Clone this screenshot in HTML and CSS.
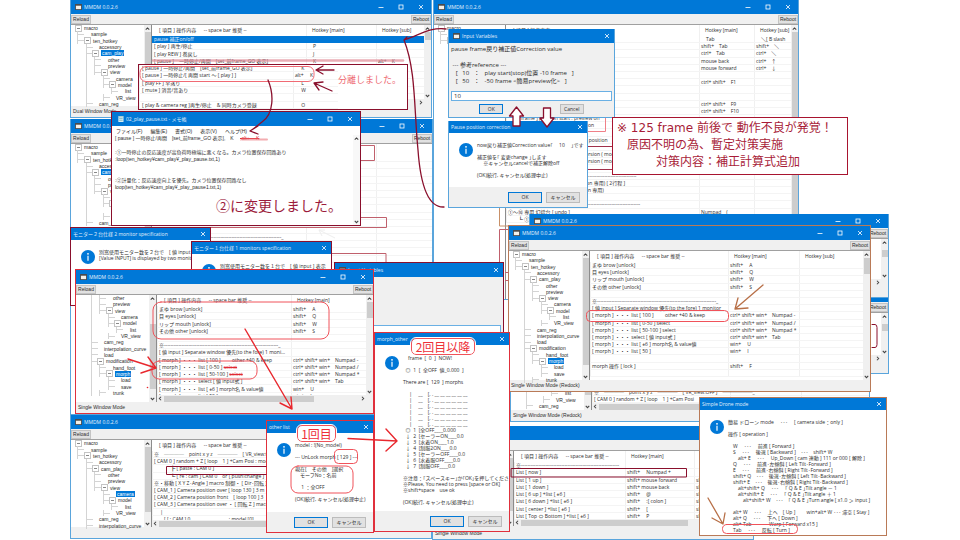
FILE: index.html
```html
<!DOCTYPE html>
<html lang="ja">
<head>
<meta charset="utf-8">
<meta name="viewport" content="width=device-width, initial-scale=1">
<title>MMDM 0.0.2.6</title>
<link rel="stylesheet" href="styles.css">
</head>
<body>
<svg class="sprite" aria-hidden="true">
  <symbol id="app" viewBox="0 0 8 7"><rect width="8" height="7" fill="#4a4a4a"/><rect x="1" y="2" width="6" height="4" fill="#f4f0e8"/></symbol>
  <symbol id="note" viewBox="0 0 7 7"><rect x="1" width="6" height="7" fill="#d8eef4"/><path d="M1 1h6M2 3h4M2 5h4" stroke="#5a9aa8" stroke-width=".7"/></symbol>
  <symbol id="min" viewBox="0 0 6 6"><path d="M.5 3.5h5" stroke="#fff" stroke-width=".8"/></symbol>
  <symbol id="max" viewBox="0 0 6 6"><rect x="1" y="1" width="4" height="4" fill="none" stroke="#fff" stroke-width=".8"/></symbol>
  <symbol id="close" viewBox="0 0 6 6"><path d="M1 1l4 4M5 1l-4 4" stroke="#fff" stroke-width=".8"/></symbol>
  <symbol id="up" viewBox="0 0 6 6"><path d="M1.5 4L3 2.5 4.500 4" fill="none" stroke="#444" stroke-width=".9"/></symbol>
  <symbol id="down" viewBox="0 0 6 6"><path d="M1.500 2.500L3 4l1.500-1.500" fill="none" stroke="#444" stroke-width=".9"/></symbol>
  <symbol id="left" viewBox="0 0 6 6"><path d="M3.500 1.500L2 3l1.500 1.500" fill="none" stroke="#444" stroke-width=".9"/></symbol>
  <symbol id="right" viewBox="0 0 6 6"><path d="M2.500 1.500L4 3 2.500 4.500" fill="none" stroke="#444" stroke-width=".9"/></symbol>
  <symbol id="info" viewBox="0 0 14 14"><circle cx="7" cy="7" r="7" fill="#0078d7"/><circle cx="7" cy="3.800" r=".9" fill="#fff"/><path d="M7 5.800v5" stroke="#fff" stroke-width="1.200"/></symbol>
</svg>

<main class="desktop">

<section class="window main-top">
  <header class="titlebar"><svg class="app"><use href="#app"/></svg><h2>MMDM 0.0.2.6</h2><button aria-label="Minimize"><svg><use href="#min"/></svg></button><button aria-label="Maximize"><svg><use href="#max"/></svg></button><button aria-label="Close"><svg><use href="#close"/></svg></button></header>
  <div class="toolbar"><button>Reload</button><button>Reboot</button></div>
  <div class="body">
    <ul class="tree t13"><li class="d0 node">macro</li><li class="d1">sample</li><li class="d1 node">ten_hotkey</li><li class="d2">accessory</li><li class="d2 node"><b>cam_play</b></li><li class="d3">other</li><li class="d3">preview</li><li class="d3 node">view</li><li class="d4">camera</li><li class="d4 node">model</li><li class="d5">list</li><li class="d4">VR_view</li><li class="d2">cam_reg</li></ul>
    <div class="vscroll"><svg><use href="#up"/></svg><i class="long"></i><svg><use href="#down"/></svg></div>
    <div class="pane"><div class="view">
      <table class="r9"><thead><tr><th class="item">[ 項目 ] 操作内容 　 -- space bar 推奨 --</th><th class="hot">Hotkey [main]</th><th>Hotkey [sub]</th></tr></thead><tbody>
      <tr class="sel"><td>pause 補正on/off</td><td></td><td></td></tr>
      <tr><td>[ play ] 再生/停止</td><td>　P</td><td></td></tr>
      <tr><td>[ play REW ] 巻戻し</td><td>　J</td><td></td></tr>
      <tr><td>[ pause ]　一時停止/再開　[set_前frame_GO 表示]</td><td>　K</td><td>alt+　K</td></tr>
      <tr><td></td><td></td><td></td></tr><tr><td></td><td></td><td></td></tr><tr><td></td><td></td><td></td></tr><tr><td></td><td></td><td></td></tr><tr><td></td><td></td><td></td></tr></tbody></table>
      <div class="vscroll"><svg><use href="#up"/></svg><i></i><svg><use href="#down"/></svg></div></div>
      <div class="hscroll"><svg><use href="#left"/></svg><i></i><svg><use href="#right"/></svg></div>
    </div>
  </div>
  <footer class="status">Dual Window Mode</footer>
</section>

<section class="window main-mid">
  <header class="titlebar"><svg class="app"><use href="#app"/></svg><h2>MMDM 0.0.2.6</h2><button aria-label="Minimize"><svg><use href="#min"/></svg></button><button aria-label="Maximize"><svg><use href="#max"/></svg></button><button aria-label="Close"><svg><use href="#close"/></svg></button></header>
  <div class="toolbar"><button>Reload</button><button>Reboot</button></div>
  <div class="body">
    <ul class="tree t13"><li class="d0 node">macro</li><li class="d1">sample</li><li class="d1 node">ten_hotkey</li><li class="d2">accessory</li><li class="d2 node"><b>cam_play</b></li><li class="d3">other</li><li class="d3">preview</li><li class="d3 node">view</li><li class="d4">camera</li><li class="d4 node">model</li><li class="d5">list</li><li class="d4">VR_view</li><li class="d2">cam_reg</li></ul>
    <div class="vscroll"><svg><use href="#up"/></svg><i class="long"></i><svg><use href="#down"/></svg></div>
    <div class="pane"><div class="view">
      <table class="r16"><thead><tr><th class="item"></th><th class="hot"></th><th></th></tr></thead><tbody>
      <tr><td></td><td></td><td></td></tr><tr><td></td><td></td><td></td></tr><tr><td></td><td></td><td></td></tr><tr><td></td><td></td><td></td></tr><tr><td></td><td></td><td></td></tr><tr><td></td><td></td><td></td></tr><tr><td></td><td></td><td></td></tr><tr><td></td><td></td><td></td></tr><tr><td></td><td></td><td></td></tr>
      <tr><td>[ frame ] jump [ start ] 位置 / [ set_前frame ]</td><td></td><td></td></tr>
      <tr><td></td><td></td><td></td></tr>
      <tr><td>※----------------------------------------------------------------------------_</td><td></td><td></td></tr>
      <tr><td></td><td></td><td></td></tr><tr><td></td><td></td><td></td></tr><tr><td></td><td></td><td></td></tr><tr><td></td><td></td><td></td></tr></tbody></table></div>
    </div>
  </div>
</section>

<section class="window main-right">
  <header class="titlebar"><svg class="app"><use href="#app"/></svg><h2>MMDM 0.0.2.6</h2><button aria-label="Minimize"><svg><use href="#min"/></svg></button><button aria-label="Maximize"><svg><use href="#max"/></svg></button><button aria-label="Close"><svg><use href="#close"/></svg></button></header>
  <div class="toolbar"><button>Reload</button><button>Reboot</button></div>
  <div class="body">
    <ul class="tree t13 narrow"><li class="d0 node">macro</li><li class="d1">sample</li><li class="d1 node">ten_hotkey</li><li class="d2">accessory</li><li class="d2 node">cam_play</li><li class="d3">other</li><li class="d3">preview</li><li class="d3 node">view</li><li class="d4">camera</li><li class="d4 node">model</li><li class="d5">list</li><li class="d4">VR_view</li><li class="d2">cam_reg</li></ul>
    <div class="pane"><div class="view">
      <table class="r26"><thead><tr><th class="item">[ 項目 ] 操作内容</th><th class="hot">Hotkey [main]</th><th>Hotkey [sub]</th></tr></thead><tbody>
      <tr><td></td><td>　Tab</td><td>　＼[ B slash</td></tr>
      <tr><td></td><td>shift+　Tab</td><td>shift+　＼</td></tr>
      <tr><td></td><td>ctrl+　Tab</td><td>ctrl+　＼</td></tr>
      <tr><td></td><td>mouse back</td><td>ctrl+　↑</td></tr>
      <tr><td></td><td>mouse forward</td><td>ctrl+　↓</td></tr>
      <tr><td></td><td></td><td></td></tr>
      <tr><td></td><td>ctrl+ shift+　F1</td><td></td></tr>
      <tr><td></td><td></td><td></td></tr><tr><td></td><td></td><td></td></tr>
      <tr><td></td><td>ctrl+ shift+　F9</td><td></td></tr>
      <tr><td></td><td>ctrl+ shift+　F10</td><td></td></tr>
      <tr><td>　　[ frame ] position start : preview on</td><td></td><td></td></tr>
      <tr><td>[ frame ] position camera position on</td><td></td><td></td></tr>
      <tr><td></td><td></td><td></td></tr>
      <tr><td>　　[ CAM ] reset camera distance position</td><td></td><td></td></tr>
      <tr><td></td><td></td><td></td></tr>
      <tr><td>　　[ CAM ] position version conversion ( model )</td><td></td><td></td></tr>
      <tr><td>　　[ CAM ] position version conversion ( model )</td><td></td><td></td></tr>
      <tr><td></td><td></td><td></td></tr>
      <tr><td>※---------------- CAM option settings ------------------------------</td><td></td><td></td></tr>
      <tr><td>　　　　　[ undo ] ( position version 専用) [ 2行程 ]</td><td></td><td></td></tr>
      <tr><td>　　　　　[ redo ] ( position version 専用)</td><td></td><td></td></tr>
      <tr><td></td><td></td><td></td></tr>
      <tr><td>※-------------------------------------------------------------------------------</td><td></td><td></td></tr>
      <tr><td>①～⑩ 専用 幻燈台 [ undo ]</td><td>Numpad　(</td><td></td></tr>
      <tr><td>　　┗ ①</td><td></td><td></td></tr></tbody></table>
      <div class="vscroll"><svg><use href="#up"/></svg><i class="long"></i></div></div>
    </div>
  </div>
</section>

<svg class="marks" viewBox="0 0 960 540" aria-hidden="true">
  <g fill="none" stroke="#c0606c" stroke-width="1">
    <path d="M330 145.500h44.500v15H330M340 217.500h46.500v10H180M180 253.500h206v12M330 253.500h56"/>
    <path d="M590 117.500h15.500v14H580" stroke="#f08088"/>
    <path d="M585 146.500h30M585 169.500h100" stroke="#a0304a"/>
    <path d="M499.500 207v19h12" stroke="#c89068"/>
    <path d="M512 229.500h-12.500v70M505 272.500h6M505 280.500h6"/>
  </g>
  <path d="M335 238l-16-8 6 0M319 230l3 6" fill="none" stroke="#eee"/>
</svg>

<section class="window right-low">
  <header class="titlebar"><h2>MMDM 0.0.2.6</h2></header>
  <div class="toolbar"><button>Reload</button><button>Reboot</button></div>
  <div class="body"><div class="pane"><div class="view"><div class="fill"></div><div class="vscroll"><svg><use href="#up"/></svg><i class="lower"></i><svg><use href="#down"/></svg></div></div><div class="hscroll"><svg><use href="#left"/></svg><i></i><svg><use href="#right"/></svg></div></div></div>
  <footer class="status"></footer>
</section>

<section class="window right-back">
  <header class="titlebar"><svg class="app"><use href="#app"/></svg><h2>MMDM 0.0.2.6</h2><button aria-label="Minimize"><svg><use href="#min"/></svg></button><button aria-label="Maximize"><svg><use href="#max"/></svg></button><button aria-label="Close"><svg><use href="#close"/></svg></button></header>
  <div class="toolbar"><button>Reload</button><button>Reboot</button></div>
  <div class="body"><div class="pane"><div class="view"><div class="fill"></div><div class="vscroll"><svg><use href="#up"/></svg><i class="lower"></i><svg><use href="#down"/></svg></div></div><div class="hscroll"><svg><use href="#left"/></svg><i></i><svg><use href="#right"/></svg></div></div></div>
  <footer class="status"></footer>
</section>

<section class="window redock-back">
  <header class="titlebar"><h2>MMDM 0.0.2.6</h2></header>
  <div class="toolbar"><button>Reload</button><button>Reboot</button></div>
  <div class="body">
    <ul class="tree t13"><li class="d0 node">macro</li><li class="d1">sample</li><li class="d1 node">ten_hotkey</li><li class="d2">accessory</li><li class="d2 node">cam_play</li><li class="d3">other</li><li class="d3">preview</li><li class="d3 node">view</li><li class="d4">camera</li><li class="d4 node">model</li><li class="d5">list</li><li class="d4">VR_view</li><li class="d2">cam_reg</li></ul>
    <div class="vscroll"><svg><use href="#up"/></svg><i class="long"></i><svg><use href="#down"/></svg></div>
    <div class="pane"><div class="view">
      <table class="r9"><thead><tr><th class="item"></th><th class="hot"></th><th></th></tr></thead><tbody>
      <tr><td></td><td></td><td></td></tr><tr><td></td><td></td><td></td></tr><tr><td></td><td></td><td></td></tr><tr><td></td><td></td><td></td></tr><tr><td></td><td></td><td></td></tr><tr><td></td><td></td><td></td></tr><tr><td></td><td></td><td></td></tr>
      <tr><td>※　────　point x y z　────　[ VR_view:OFF ]　──────_</td><td></td><td></td></tr>
      <tr><td>[ CAM 0 ] random + Z [ loop　1 ] +Cam Posi</td><td></td><td></td></tr></tbody></table></div>
      <div class="hscroll"><svg><use href="#left"/></svg><i></i><svg><use href="#right"/></svg></div>
    </div>
  </div>
  <footer class="status">Single Window Mode (Redock)</footer>
</section>

<section class="window list-low">
  <header class="titlebar"><svg class="app"><use href="#app"/></svg><h2>MMDM 0.0.2.6</h2><button aria-label="Minimize"><svg><use href="#min"/></svg></button><button aria-label="Maximize"><svg><use href="#max"/></svg></button><button aria-label="Close"><svg><use href="#close"/></svg></button></header>
  <div class="toolbar"><button>Reload</button><button>Reboot</button></div>
  <div class="body">
    <ul class="tree t13"><li class="d0 node">macro</li><li class="d1">sample</li></ul>
    <div class="vscroll"><svg><use href="#up"/></svg><i class="long"></i><svg><use href="#down"/></svg></div>
    <div class="pane"><div class="view">
      <table class="r8"><thead><tr><th class="item">[ 項目 ] 操作内容 　 -- space bar 推奨 --</th><th class="hot">Hotkey [main]</th><th></th></tr></thead><tbody>
      <tr><td>※-------------------------------------------------------------</td><td></td><td></td></tr>
      <tr><td>List [ now ]</td><td>shift+　 Numpad +</td><td></td></tr>
      <tr><td>List [ 1 up ]</td><td>shift+ mouse forward</td><td>shift+</td></tr>
      <tr><td>List [ 1 down ]</td><td>shift+ mouse back</td><td>shift+</td></tr>
      <tr><td>List [ 6 up ] +list [ ±6 ]</td><td>shift+　 @</td><td>shift+</td></tr>
      <tr><td>List [ 6 down ] +list [ ±6 ]</td><td>shift+　 :[ colon ]</td><td>shift+</td></tr>
      <tr><td>List [ center ] +list [ ±6 ]</td><td>shift+　 [</td><td>shift+</td></tr>
      <tr><td>List [ Top ⇔ Bottom ] +list [ ±6 ]</td><td>shift+　 P</td><td>shift+</td></tr></tbody></table></div>
      <div class="hscroll"><svg><use href="#left"/></svg><i></i><svg><use href="#right"/></svg></div>
    </div>
  </div>
  <footer class="status">Single Window Mode</footer>
</section>

<section class="window redock">
  <header class="titlebar"><svg class="app"><use href="#app"/></svg><h2>MMDM 0.0.2.6</h2><button aria-label="Minimize"><svg><use href="#min"/></svg></button><button aria-label="Maximize"><svg><use href="#max"/></svg></button><button aria-label="Close"><svg><use href="#close"/></svg></button></header>
  <div class="toolbar"><button>Reload</button><button>Reboot</button></div>
  <div class="body">
    <ul class="tree t21"><li class="d0 node">macro</li><li class="d1">sample</li><li class="d1 node">ten_hotkey</li><li class="d2">accessory</li><li class="d2 node">cam_play</li><li class="d3">other</li><li class="d3">preview</li><li class="d3 node">view</li><li class="d4">camera</li><li class="d4 node">model</li><li class="d5">list</li><li class="d4">VR_view</li><li class="d2">cam_reg</li><li class="d2">interpolation_curve</li><li class="d2">load</li><li class="d2 node">modification</li><li class="d3">hand_foot</li><li class="d3 node"><b>morph</b></li><li class="d4">load</li><li class="d4">save</li><li class="d3">trunk</li></ul>
    <div class="vscroll"><svg><use href="#up"/></svg><i class="long"></i><svg><use href="#down"/></svg></div>
    <div class="pane"><div class="view">
      <table class="r16"><thead><tr><th class="item">[ 項目 ] 操作内容 　 -- space bar 推奨 --</th><th class="hot">Hotkey [main]</th><th>Hotkey [sub]</th></tr></thead><tbody>
      <tr><td>まゆ brow [unlock]</td><td>shift+　 A</td><td></td></tr>
      <tr><td>目 eyes [unlock]</td><td>shift+　 Q</td><td></td></tr>
      <tr><td>リップ mouth [unlock]</td><td>shift+　 W</td><td></td></tr>
      <tr><td>その他 other [unlock]</td><td>shift+　 S</td><td></td></tr>
      <tr><td></td><td></td><td></td></tr>
      <tr><td>※--------------------------------------------------------------------------_</td><td></td><td></td></tr>
      <tr><td>[ 値 input ] Separate window 優先(to the fore) 1 monitor</td><td></td><td></td></tr>
      <tr><td>[ morph ] ・・・ list [ 100 ]　　 other +40 &amp; keep</td><td>ctrl+ shift+ win+　Numpad -</td><td></td></tr>
      <tr><td>[ morph ] ・・・ list [ 0-50 ] select</td><td>ctrl+ shift+ win+　Numpad /</td><td></td></tr>
      <tr><td>[ morph ] ・・・ list [ 50-100 ] select</td><td>ctrl+ shift+ win+　Numpad *</td><td></td></tr>
      <tr><td>[ morph ] ・・・ select [ 値 input式 ]</td><td>ctrl+ shift+ win+　Tab</td><td></td></tr>
      <tr><td>[ morph ] ・・・ list [ ±6 ] morph名 &amp; value値</td><td>win+　 U</td><td></td></tr>
      <tr><td>[ morph ] ・・・ list [ 50 ]</td><td>win+　 I</td><td></td></tr>
      <tr><td></td><td></td><td></td></tr>
      <tr><td>morph 操作 [ lock ]</td><td>shift+　 F</td><td></td></tr>
      <tr><td></td><td></td><td></td></tr></tbody></table>
      <div class="vscroll"><svg><use href="#up"/></svg><i class="mid"></i><svg><use href="#down"/></svg></div></div>
    </div>
  </div>
  <footer class="status">Single Window Mode (Redock)</footer>
</section>

<section class="window cam-list">
  <header class="titlebar"><svg class="app"><use href="#app"/></svg><h2>MMDM 0.0.2.6</h2><button aria-label="Minimize"><svg><use href="#min"/></svg></button><button aria-label="Maximize"><svg><use href="#max"/></svg></button><button aria-label="Close"><svg><use href="#close"/></svg></button></header>
  <div class="toolbar"><button>Reload</button><button>Reboot</button></div>
  <div class="body">
    <ul class="tree t14"><li class="d0 node">macro</li><li class="d1">sample</li><li class="d1 node">ten_hotkey</li><li class="d2">accessory</li><li class="d2 node">cam_play</li><li class="d3">other</li><li class="d3">preview</li><li class="d3 node">view</li><li class="d4"><b>camera</b></li><li class="d4 node">model</li><li class="d5">list</li><li class="d4">VR_view</li><li class="d2">cam_reg</li><li class="d2">interpolation_curve</li></ul>
    <div class="vscroll"><svg><use href="#up"/></svg><i class="long"></i><svg><use href="#down"/></svg></div>
    <div class="pane"><div class="view">
      <table class="r10"><thead><tr><th class="item">[ 項目 ] 操作内容 　 -- space bar 推奨 --</th><th class="hot"></th><th></th></tr></thead><tbody>
      <tr><td>※　────　point x y z　────　[ VR_view:OFF ]</td><td></td><td></td></tr>
      <tr><td>[ CAM 0 ] random + Z [ loop　1 ] +Cam Posi : model</td><td></td><td></td></tr>
      <tr><td>　　　 ┣ [ paste : CAM 0 ]</td><td></td><td></td></tr>
      <tr><td>　　　 ┗ [ re : cam ] CAM 0　or [ push!change ]</td><td></td><td></td></tr>
      <tr><td>※・移動 [ X Y Z･Angle ] macro 制御・ [ Dir･回転 ]</td><td></td><td></td></tr>
      <tr><td>[ CAM_1 ] Camera position over [ loop 130 ] 3 m</td><td></td><td></td></tr>
      <tr><td>[ CAM_2 ] Camera position front　[ loop 100 ] 3</td><td></td><td></td></tr>
      <tr><td>[ CAM_3 ] Camera position over ・ [ 回転 Z ] macro</td><td></td><td></td></tr>
      <tr><td>　 |</td><td></td><td></td></tr>
      <tr><td>　　[ [ : CAM ] 0　　　　　　　_ : model [0]</td><td></td><td></td></tr></tbody></table></div>
      <div class="hscroll"><svg><use href="#left"/></svg><i></i><svg><use href="#right"/></svg></div>
    </div>
  </div>
  <footer class="status"></footer>
</section>

<section class="dialog msg monitors2">
  <header class="titlebar"><h2>モニター２台仕様 2 monitor specification</h2><button aria-label="Close"><svg><use href="#close"/></svg></button></header>
  <div class="content"><svg class="info"><use href="#info"/></svg><p>別窓使用モニター数を２台で　[ 値 input ] 表示
[Value INPUT] is displayed by two monitors</p></div>
</section>
<section class="dialog msg monitors1">
  <header class="titlebar"><h2>モニター１台仕様 1 monitors specification</h2><button aria-label="Close"><svg><use href="#close"/></svg></button></header>
  <div class="content"><svg class="info"><use href="#info"/></svg><p>別窓使用モニター数を１台で　[ 値 input ] 表示</p></div>
</section>
<section class="dialog gray variables-back">
  <header class="titlebar"><svg class="app"><use href="#app"/></svg><h2>Input Variables</h2><button aria-label="Close"><svg><use href="#close"/></svg></button></header>
  <input class="field" aria-label="Value">
</section>

<section class="window morph-list">
  <header class="titlebar"><svg class="app"><use href="#app"/></svg><h2>MMDM 0.0.2.6</h2><button aria-label="Minimize"><svg><use href="#min"/></svg></button><button aria-label="Maximize"><svg><use href="#max"/></svg></button><button aria-label="Close"><svg><use href="#close"/></svg></button></header>
  <div class="toolbar"><button>Reload</button><button>Reboot</button></div>
  <div class="body">
    <ul class="tree t16"><li class="d3">other</li><li class="d3">preview</li><li class="d3 node">view</li><li class="d4">camera</li><li class="d4 node">model</li><li class="d5">list</li><li class="d4">VR_view</li><li class="d2">cam_reg</li><li class="d2">interpolation_curve</li><li class="d2">load</li><li class="d2 node">modification</li><li class="d3">hand_foot</li><li class="d3 node"><b>morph</b></li><li class="d4">load</li><li class="d4">save</li><li class="d3">trunk</li></ul>
    <div class="vscroll"><svg><use href="#up"/></svg><i class="rest"></i><svg><use href="#down"/></svg></div>
    <div class="pane"><div class="view">
      <table class="r13"><thead><tr><th class="item">[ 項目 ] 操作内容 　 -- space bar 推奨 --</th><th class="hot">Hotkey [main]</th></tr></thead><tbody>
      <tr><td>まゆ brow [unlock]</td><td>shift+　 A</td></tr>
      <tr><td>目 eyes [unlock]</td><td>shift+　 Q</td></tr>
      <tr><td>リップ mouth [unlock]</td><td>shift+　 W</td></tr>
      <tr><td>その他 other [unlock]</td><td>shift+　 S</td></tr>
      <tr><td></td><td></td></tr>
      <tr><td>※-----------------------------------------------------------------------_</td><td></td></tr>
      <tr><td>[ 値 input ] Separate window 優先(to the fore) 1 moni...</td><td></td></tr>
      <tr><td>[ morph ] ・・・ list [ 100 ]　　 other +40 &amp; keep</td><td>ctrl+ shift+ win+　Numpad -</td></tr>
      <tr><td>[ morph ] ・・・ list [ 0-50 ] <s>select</s></td><td>ctrl+ shift+ win+　Numpad /</td></tr>
      <tr><td>[ morph ] ・・・ list [ 50-100 ] <s>select</s></td><td>ctrl+ shift+ win+　Numpad *</td></tr>
      <tr><td>[ morph ] ・・・ select [ 値 input式 ]</td><td>ctrl+ shift+ win+　Tab</td></tr>
      <tr><td>[ morph ] ・・・ list [ ±6 ] morph名 &amp; value値</td><td>win+　 U</td></tr>
      <tr><td>[ morph ] ・・・ list [ 50 ]</td><td>win+　 I</td></tr></tbody></table>
      <div class="vscroll"><svg><use href="#up"/></svg><i class="mid"></i><svg><use href="#down"/></svg></div></div>
      <div class="hscroll"><svg><use href="#left"/></svg><i></i><svg><use href="#right"/></svg></div>
    </div>
  </div>
  <footer class="status">Single Window Mode</footer>
</section>

<section class="excerpt">
  <table><tbody>
  <tr><td>[ pause ] 一時停止/再開　[set_前frame_GO 表示]</td><td>　 K</td></tr>
  <tr><td>[ pause ] 一時停止/[ 再開 start ～ [ play ] ]</td><td class="both">alt+　 K</td></tr>
  <tr><td>[ play FF ] 早送り</td><td>　 L</td></tr>
  <tr><td>[ mute ] 消音/音あり</td><td>　 W</td></tr>
  <tr><td></td><td></td></tr>
  <tr><td>[ play &amp; camera reg ]再生/停止　&amp; 同時カメラ登録</td><td>　 O</td></tr></tbody></table>
  <strong>分離しました。</strong>
</section>

<section class="window notepad">
  <header class="titlebar"><svg class="app"><use href="#note"/></svg><h2>02_play_pause.txt - メモ帳</h2><button aria-label="Minimize"><svg><use href="#min"/></svg></button><button aria-label="Maximize"><svg><use href="#max"/></svg></button><button aria-label="Close"><svg><use href="#close"/></svg></button></header>
  <nav class="menu"><a href="#">ファイル(F)</a><a href="#">編集(E)</a><a href="#">書式(O)</a><a href="#">表示(V)</a><a href="#">ヘルプ(H)</a></nav>
  <div class="page"><p>[ pause ] 一時停止/再開　[set_前frame_GO 表示],　K　 <s>,alt+　 K</s>

:①一時停止の反応速度が高負荷時極端に悪くなる。カメラ位置保存回路あり
:loop(ten_hotkey¥cam_play¥_play_pause.txt,1)


:②計量化：反応速度向上を優先。カメラ位置保存回路なし
loop(ten_hotkey¥cam_play¥_play_pause1.txt,1)</p>
  <div class="vscroll pale"><svg><use href="#up"/></svg><i></i><svg><use href="#down"/></svg></div></div>
  <strong class="changed">②に変更しました。</strong>
</section>

<section class="dialog gray variables">
  <header class="titlebar"><svg class="app"><use href="#app"/></svg><h2>Input Variables</h2><button aria-label="Close"><svg><use href="#close"/></svg></button></header>
  <label for="correction">pause frame戻り補正値Correction value

 --- 参考reference ---
   [   10   ：   play start(stop)位置 -10 frame   ]
   [   50   ：   -50 frame &lt;簡易preview化&gt;   ]</label>
  <input class="field" id="correction" value="10">
  <div class="actions"><button class="default">OK</button><button>Cancel</button></div>
</section>

<section class="dialog msg correction">
  <header class="titlebar"><h2>Pause position correction</h2><button aria-label="Close"><svg><use href="#close"/></svg></button></header>
  <div class="content"><svg class="info"><use href="#info"/></svg><p>now戻り補正値Correction value｢　 10 　｣です

補正値を｢ 変更change ｣します
　 ※キャンセルcancelで補正解除off

(OK)続行, キャンセル(処理中止)</p></div>
  <footer><button class="default">OK</button><button>キャンセル</button></footer>
</section>

<aside class="notice"><strong>※ 125 frame 前後で 動作不良が発覚！</strong><p>原因不明の為、暫定対策実施</p><p class="deep">対策内容：補正計算式追加</p></aside>

<section class="dialog msg other-list">
  <header class="titlebar"><h2>other list</h2><button aria-label="Close"><svg><use href="#close"/></svg></button></header>
  <div class="content"><svg class="info"><use href="#info"/></svg><p>model : !(No_model)

--- UnLock morph [ 129 ] ---

現在[　その他　]選択
　モーフNo：名前

　 1 ：全OFF

(OK)続行, キャンセル(処理中止)</p></div>
  <footer><button class="default">OK</button><button>キャンセル</button></footer>
</section>
<strong class="tag first">1回目</strong>

<section class="dialog msg morph-other">
  <header class="titlebar"><h2>morph_other</h2><button aria-label="Close"><svg><use href="#close"/></svg></button></header>
  <div class="content"><svg class="info"><use href="#info"/></svg><p>　frame&nbsp; [&nbsp; 0&nbsp; ]&nbsp; NOW!

&nbsp; ◎&nbsp; 1&nbsp; [&nbsp; 全OFF&nbsp; 値_0.000&nbsp; ]

There are [&nbsp; 129&nbsp; ] morphs

　 |　 __　[. . __ __ __ __ __ __
　 |　 __　[. . __ __ __ __ __ __
　 |　 __　[. . __ __ __ __ __ __
　 |　 __　[. . __ __ __ __ __ __
　 |　 __　[. . __ __ __ __ __ __
　 |　 __　[. . __ __ __ __ __ __
&nbsp; ◎&nbsp; 1&nbsp; [全OFF____0.000
&nbsp; ↓&nbsp; 2&nbsp; [セーラーON____0.0
&nbsp; ↓&nbsp; 3&nbsp; [水着ON____1.0
&nbsp; ↓&nbsp; 4&nbsp; [制服2ON____0.0
&nbsp; ↓&nbsp; 5&nbsp; [セーラーOFF____0.0
&nbsp; ↓&nbsp; 6&nbsp; [水着服OFF____0.0
&nbsp; ↓&nbsp; 7&nbsp; [制服OFF____0.0

※注意：｢スペースキー｣か｢OK｣を押してください
※Please, You need to press [space or OK]
※shift+space　use ok

(OK)続行, キャンセル(処理中止)</p></div>
  <footer><button class="default">OK</button><button>キャンセル</button></footer>
</section>
<strong class="tag second">2回目以降</strong>

<section class="dialog msg drone">
  <header class="titlebar"><h2>Simple Drone mode</h2><button aria-label="Close"><svg><use href="#close"/></svg></button></header>
  <div class="content"><svg class="info"><use href="#info"/></svg><p>簡易 ドローン mode　 ･･･ 　[ camera side：only ]

操作 [ operation ]

　W　 ･･･ 　前進 [ Forward ]
　S　 ･･･ 　後退 [ Backward ]　･･･　shift+ W
　　alt+ E　 ･･･ 　Up_Down [ cam 連動 ] 111 or 000 [ 解除 ]
　Q　 ･･･ 　前進･左傾斜 [ Left Tilt･Forward ]
　E　 ･･･ 　前進･右傾斜 [ Right Tilt･Forward ]
　shift+ Q　･･･　後退･左傾斜 [ Left Tilt･Backward ]
　shift+ E　･･･　後退･右傾斜 [ Right Tilt･Backward ]
　　alt+shift+ Q　 ･･･ 　｢ Q &amp; E ｣Tilt angle － 1
　　alt+shift+ E　 ･･･ 　｢ Q &amp; E ｣Tilt angle ＋ 1
　　　alt+shift+ W　･･･　｢ Q &amp; E ｣Turn angle [ x1.0 ＞ input ]

　alt+ W　 ･･･ 　上へ　[ Up ]　　 win+alt+ W ･･･ 滞空 [ Stay ]
　alt+ Q　 ･･･ 　下へ [ Down ]
　alt+ Tab　･･･　Warp [ Forward x15 ]
　Tab　 ･･･ 　反転 [ Turn ]</p></div>
</section>

<svg class="marks" viewBox="0 0 960 540" aria-hidden="true">
  <g fill="none" stroke-linecap="round" stroke-linejoin="round">
    <path d="M153 60.500H403" stroke="#e08a96" stroke-width="2.500" opacity=".7"/>
    <path d="M242 139.500H267" stroke="#ee8a90" stroke-width="2" opacity=".7"/>
    <rect x="140" y="66.500" width="174" height="15" rx="6" stroke="#f06a74"/>
    <g stroke="#8a0f2c" stroke-width="1.300">
      <path d="M334 70H316l7-4M316 70l7 4M332 91l-18-8 9-1M314 83l5 7"/>
      <path d="M268 80c6 14 6 34-6 42-4 3-7 6-12 9l8-5M250 131l8 3"/>
      <path d="M446 29c-16-2-26 6-42 11l3-3M404 40c12 30 10 70 14 110 2 28 8 58 26 57"/>
    </g>
    <g fill="#fff" stroke="#8a0f2c" stroke-width="1.300">
      <path d="M516.500 107l7 9h-3.500v10h-7v-10h-3.500z"/>
      <path d="M547 127l-7-9h3.500v-10h7v10h3.500z"/>
    </g>
    <path d="M266 466.500H166.500v8H266" stroke="#8a0f2c"/>
    <path d="M511.500 468.500h175v8.500h-175z" stroke="#8a0f2c"/>
    <path d="M872 324.500h3q2 0 2 3v17q0 3-2 3h-3" stroke="#8a0f2c"/>
    <g stroke="#f0525a">
      <rect x="153" y="302" width="176" height="37" rx="8"/>
      <rect x="152" y="361" width="105" height="18" rx="7"/>
      <rect x="586.500" y="310.500" width="142" height="11" rx="4"/>
      <rect x="334.500" y="449.500" width="23" height="14" rx="4"/>
      <rect x="291" y="466" width="62" height="27" rx="7"/>
      <rect x="722.500" y="524.500" width="75" height="9" rx="4"/>
    </g>
    <g stroke="#e8282e" stroke-width="1.400">
      <path d="M128 359l28 9-8-11M156 368l-15 5M245 329l47 80-12-6M292 409l-1-12M348 438.500l49 2.500-11-12M397 441l-11 10"/>
    </g>
    <circle cx="147.500" cy="387.500" r=".8" fill="#e8282e"/>
    <path d="M763 285l-28 24 3-11M735 309l13-1M708 498l15 26-11-6M723 524l2-11" stroke="#b87048" stroke-width="1.300"/>
  </g>
</svg>
</main>
</body>
</html>
```
FILE: styles.css
```css
* { box-sizing: border-box; margin: 0; padding: 0; }

body {
  background: #fff;
  color: #2c2c2c;
  font: 5px/7px "Liberation Sans", "Noto Sans CJK JP", sans-serif;
}

button, input { font: inherit; color: inherit; }
.sprite { display: none; }

.desktop { position: relative; min-height: 100vh; overflow: hidden; }
.desktop > * { position: absolute; }
.marks { left: 0; top: 0; width: 960px; height: 540px; pointer-events: none; }

/* windows */
.window, .dialog {
  display: flex;
  flex-direction: column;
  overflow: hidden;
  border: 1px solid #5aa5dc;
  border-top: 0;
  background: #f0f0f0;
}

.titlebar {
  flex: 0 0 14px;
  display: flex;
  align-items: center;
  padding-left: 4px;
  background: #0078d7;
  color: #e4f1fb;
  font: 5px/7px "Open Sans", "Noto Sans CJK JP", sans-serif;
}
.titlebar h2 { flex: 1; font: inherit; white-space: nowrap; }
.titlebar button {
  display: grid;
  place-items: center;
  width: 20px;
  height: 12px;
  border: 0;
  background: none;
}
.titlebar button svg { width: 6px; height: 6px; }
.titlebar .app { width: 7px; height: 6px; margin-right: 2px; }

.toolbar {
  flex: 0 0 11px;
  display: flex;
  justify-content: space-between;
  align-items: center;
  border-bottom: 1px solid #a0a0a0;
}
.toolbar button {
  min-width: 20px;
  height: 9px;
  border: 1px solid #c4c4c4;
  background: #e1e1e1;
  line-height: 7px;
}

.body { flex: 1; display: flex; min-height: 0; background: #fff; }
.status { flex: 0 0 11px; padding: 2px 2px; white-space: nowrap; }

/* tree */
.tree {
  flex: 0 0 73px;
  display: grid;
  grid-auto-rows: 1fr;
  list-style: none;
  overflow: hidden;
}
.tree.narrow { flex-basis: 71px; }
.t13 { height: 82px; }
.t14 { height: 89px; }
.t16 { height: 101px; }
.t21 { height: 132px; }
.tree li {
  display: flex;
  align-items: center;
  min-height: 0;
  line-height: 6px;
  white-space: nowrap;
  background:
    linear-gradient(#d4d4d4, #d4d4d4) var(--x) 0 / 1px 100% no-repeat,
    linear-gradient(#d4d4d4, #d4d4d4) var(--x) 50% / 7px 1px no-repeat,
    linear-gradient(#d4d4d4, #d4d4d4) var(--y) 0 / 1px 100% no-repeat;
}
.tree li::before { content: ""; flex: 0 0 5px; margin-right: 2px; }
.tree .node::before { height: 5px; border: 1px solid #c4c4c4; background: linear-gradient(#888, #888) 50% 50% / 3px 1px no-repeat #fff; }
.tree b { font-weight: normal; padding: 0 1px; background: #0078d7; color: #fff; }
.d0 { padding-left: 4px; --x: -9px; --y: -9px; }
.d1 { padding-left: 13px; --x: 6px; --y: 6px; }
.d2 { padding-left: 21px; --x: 15px; --y: 15px; }
.d3 { padding-left: 30px; --x: 23px; --y: 15px; }
.d4 { padding-left: 38px; --x: 32px; --y: 15px; }
.d5 { padding-left: 47px; --x: 40px; --y: 15px; }

/* scrollbars */
.vscroll, .hscroll { display: flex; background: #f0f0f0; }
.vscroll { flex: 0 0 7px; flex-direction: column; justify-content: space-between; align-items: center; }
.hscroll { flex: 0 0 7px; align-items: center; justify-content: space-between; padding-right: 7px; }
.vscroll svg, .hscroll svg { flex: none; width: 7px; height: 7px; }
.vscroll i { width: 6px; height: 8px; background: #cdcdcd; margin-bottom: auto; }
.vscroll .long { height: auto; flex: 1 1 0; margin-bottom: 8px; }
.vscroll .rest { height: auto; flex: 1 1 0; margin-top: 22px; margin-bottom: 6px; }
.vscroll .mid { height: 16px; }
.vscroll .lower { margin-top: 4px; height: 7px; }
.hscroll i { flex: 0 1 72%; height: 6px; margin-right: auto; background: #cdcdcd; }
.vscroll.pale { background: #f8f8f8; }
.vscroll.pale i { background: none; }
.fill { flex: 1; }

/* hotkey list */
.pane { flex: 1; display: flex; flex-direction: column; min-width: 0; border-left: 1px solid #8c8c8c; }
.view { flex: 1; display: flex; min-height: 0; overflow: hidden; }
table { flex: 1; min-width: 0; width: 100%; table-layout: fixed; border-spacing: 0; font-family: "Open Sans", "Noto Sans CJK JP", sans-serif; }
th { height: 11px; padding-left: 7px; font-weight: normal; text-align: left; white-space: pre; }
td { height: 7px; padding-left: 2px; line-height: 7px; white-space: pre; box-shadow: inset 0 -1px #f4f4f4, inset 1px 0 #f0f0f0; }
th + th { padding-left: 6px; box-shadow: inset 1px 0 #f0f0f0; }
.sel td { background: #0078d7; color: #e4f1fb; box-shadow: none; }
.r8 { height: 69px; }
.r9 { height: 76px; }
.r10 { height: 83px; }
.r13 { height: 105px; }
.r16 { height: 126px; }
.r26 { height: 198px; }
s { color: #e02a34; }

/* window placement on the desktop */
.main-top { left: 70px; top: 0; width: 362px; height: 118px; }
.main-mid { left: 70px; top: 119px; width: 363px; height: 296px; }
.main-right { left: 433px; top: 0; width: 366px; height: 300px; }
.right-low { left: 529px; top: 288px; width: 360px; height: 86px; }
.right-back { left: 529px; top: 214px; width: 360px; height: 84px; }
.redock-back { left: 510px; top: 302px; width: 360px; height: 120px; }
.list-low { left: 432px; top: 426px; width: 322px; height: 114px; }
.redock { left: 508px; top: 225px; width: 363px; height: 167px; border: 1px solid #b97a57; }
.cam-list { left: 70px; top: 415px; width: 362px; height: 124px; }
.morph-list { left: 75px; top: 269px; width: 299px; height: 145px; border: 1px solid #e0303c; }
.main-top .item, .main-mid .item { width: 154px; }
.main-top .hot, .main-mid .hot { width: 70px; }
.main-right .item { width: 193px; }
.main-right .hot { width: 55px; }
.redock .item, .redock-back .item { width: 138px; }
.redock .hot, .redock-back .hot { width: 71px; }
.list-low .item { width: 111px; }
.list-low .hot { width: 69px; }
.list-low .status { padding-top: 4px; }
.cam-list .item { width: 154px; }
.cam-list .hot { width: 70px; }
.morph-list .item { width: 134px; }

/* highlighted excerpt */
.excerpt {
  left: 138px;
  top: 64px;
  width: 270px;
  height: 46px;
  display: flex;
  align-items: center;
  border: 1px solid #8a0f2c;
  background: #fff;
}
.excerpt table { flex: 0 0 199px; height: 44px; }
.excerpt td:first-child { width: 154px; padding-left: 3px; }
.excerpt strong { font: 9px/12px "Noto Sans CJK JP", sans-serif; color: #ee6a72; padding-bottom: 14px; white-space: nowrap; }

/* notepad */
.notepad { left: 111px; top: 111px; width: 250px; height: 115px; border: 1px solid #8a0f2c; background: #fff; }
.notepad .titlebar { padding-left: 5px; }
.menu { display: flex; gap: 8px; padding: 2px 4px 0; }
.menu a { color: inherit; text-decoration: none; }
.page { flex: 1; display: flex; min-height: 0; }
.page p { flex: 1; padding: 0 3px; white-space: pre; }
.notepad .changed { position: absolute; right: 18px; bottom: 10px; font: 14px/20px "Noto Sans CJK JP", sans-serif; color: #9c1c3c; }

/* dialogs */
.dialog { font: 5px/6px "Open Sans", "Noto Sans CJK JP", sans-serif; }
.dialog .titlebar { padding-left: 2px; }
.dialog .titlebar button { width: 15px; }
.gray .titlebar { padding-left: 4px; }
.gray label { padding: 2px 2px 0; font-size: 6px; line-height: 8px; white-space: pre; }
.field { height: 11px; margin: 8px 2px 0; padding: 0 2px; border: 1px solid #6ab0e4; background: #fff; font-size: 6px; }
.dialog button { white-space: nowrap; }
.actions { display: flex; justify-content: space-around; padding: 3px 2px; }
.actions button, .dialog footer button { height: 10px; border: 1px solid #bcbcbc; background: #e1e1e1; }
.actions button { width: 24px; }
.dialog footer button { width: 34px; height: 11px; }
.dialog .default { border: 1px solid #0078d7; }
.msg { background: #fff; }
.msg .titlebar { flex-basis: 12px; }
.content { flex: 1; display: flex; align-items: flex-start; min-height: 0; padding: 9px 0 0 10px; overflow: hidden; }
.info { flex: none; width: 14px; height: 14px; margin: 1px 4px 0 0; }
.content p { white-space: pre; }
.msg footer { flex: 0 0 20px; display: flex; justify-content: flex-end; align-items: center; gap: 4px; padding-right: 7px; background: #f0f0f0; }

.monitors2 { left: 70px; top: 227px; width: 141px; height: 79px; border: 1px solid #8a0f2c; }
.monitors1 { left: 191px; top: 241px; width: 141px; height: 60px; border: 1px solid #8a0f2c; }
.variables-back { left: 334px; top: 262px; width: 170px; height: 80px; border: 1px solid #8a0f2c; }
.variables-back .field { margin-top: 48px; }
.variables { left: 448px; top: 29px; width: 167px; height: 89px; }
.variables label { height: 40px; }
.correction { left: 448px; top: 121px; width: 140px; height: 87px; }
.other-list { left: 266px; top: 420px; width: 108px; height: 113px; border: 1px solid #e0303c; }
.morph-other { left: 374px; top: 332px; width: 136px; height: 200px; border: 1px solid #e0303c; }
.morph-other .content { padding-top: 10px; }
.drone { left: 699px; top: 397px; width: 188px; height: 139px; border: 1px solid #b97a57; }

/* red labels */
.notice {
  left: 612px;
  top: 117px;
  width: 236px;
  height: 58px;
  padding: 2px 4px;
  border: 1px solid #a8142f;
  background: #fff;
  color: #a81c38;
  font: 12px/17px "DejaVu Sans", "Noto Sans CJK JP", sans-serif;
  white-space: nowrap;
}
.notice strong { font-weight: normal; }
.notice p { padding-left: 10px; }
.notice .deep { padding-left: 39px; }
.tag {
  display: grid;
  place-items: center;
  height: 17px;
  border: 1px solid #f0525a;
  border-radius: 5px;
  outline: 1px solid #fff;
  background: #fff;
  color: #ee3038;
  font: 12px/15px "Noto Sans CJK JP", sans-serif;
  white-space: nowrap;
}
.first { left: 297px; top: 425px; width: 39px; }
.second { left: 411px; top: 338px; width: 64px; }
```
